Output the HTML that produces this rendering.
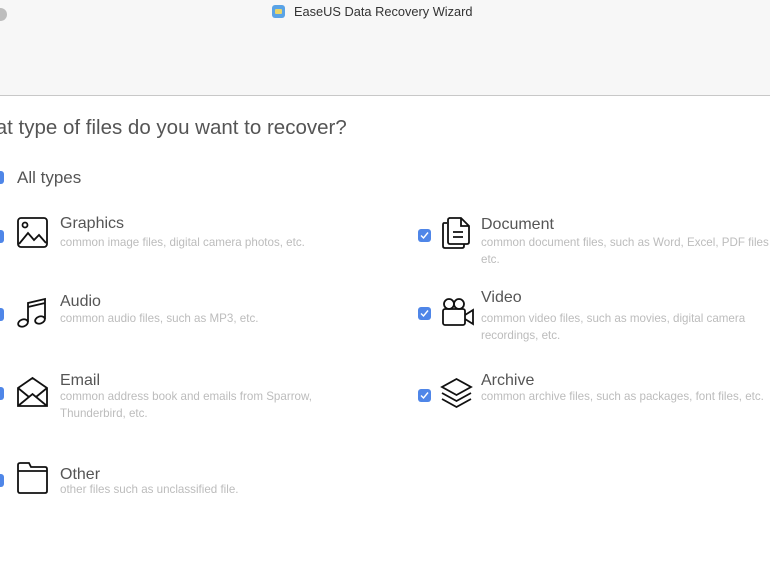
<!DOCTYPE html>
<html><head><meta charset="utf-8"><style>
*{margin:0;padding:0;box-sizing:border-box}
body{width:770px;height:578px;overflow:hidden;background:#fff;font-family:"Liberation Sans",Arial,sans-serif;position:relative}
.bar{position:absolute;left:0;top:0;width:770px;height:96px;background:#f7f7f7;border-bottom:1px solid #c8c8c8}
.dot{position:absolute;left:-6px;top:8px;width:13px;height:13px;border-radius:50%;background:#bdbdbd}
.title{position:absolute;left:294px;top:4px;font-size:12.8px;color:#333}
.appic{position:absolute;left:272px;top:5px;width:13px;height:13px;border-radius:3px;background:#5aa3e6}
.appic:after{content:"";position:absolute;left:3px;top:4px;width:7px;height:5px;background:#e9d56a;border-radius:1px}
.q{position:absolute;left:-35px;top:116px;font-size:20.5px;color:#555;white-space:nowrap}
.cb{position:absolute;width:13px;height:13px;border-radius:3px;background:#4f86e8}
.cb svg{position:absolute;left:2px;top:2px}
.h{position:absolute;font-size:16px;color:#555;white-space:nowrap}
.d{position:absolute;font-size:11.6px;color:#bcbcbc;line-height:17px}
.ic{position:absolute}
</style></head><body>
<div class="bar"><div class="dot"></div><div class="appic"></div><div class="title">EaseUS Data Recovery Wizard</div></div>
<div class="q">What type of files do you want to recover?</div>

<div class="cb" style="left:-9px;top:171px"></div>
<div class="h" style="left:17px;top:168px;font-size:17px">All types</div>

<div class="cb" style="left:-9px;top:230px"></div>
<svg class="ic" style="left:17px;top:217px" width="31" height="31" viewBox="0 0 31 31" fill="none" stroke="#111" stroke-width="1.8"><rect x="1" y="1" width="29" height="29" rx="3"/><circle cx="8" cy="8" r="2.5"/><path d="M2 27 L11 16 L17 23 L22 18 L29 26"/></svg>
<div class="h" style="left:60px;top:215px">Graphics</div>
<div class="d" style="left:60px;top:234px">common image files, digital camera photos, etc.</div>

<div class="cb" style="left:-9px;top:308px"></div>
<svg class="ic" style="left:17px;top:297px" width="32" height="32" viewBox="0 0 32 32" fill="none" stroke="#111" stroke-width="1.8"><ellipse cx="6" cy="26" rx="5" ry="3.5" transform="rotate(-20 6 26)"/><ellipse cx="23" cy="23" rx="5" ry="3.5" transform="rotate(-20 23 23)"/><path d="M11 25 L11 6 L28 2 L28 22 M11 10 L28 6"/></svg>
<div class="h" style="left:60px;top:293px">Audio</div>
<div class="d" style="left:60px;top:310px">common audio files, such as MP3, etc.</div>

<div class="cb" style="left:-9px;top:387px"></div>
<svg class="ic" style="left:17px;top:376px" width="31" height="32" viewBox="0 0 31 32" fill="none" stroke="#111" stroke-width="1.8"><path d="M1 12 L15.5 2 L30 12 L30 30 L1 30 Z M1 12 L12 21 M30 12 L19 21 M1 30 L15.5 18 L30 30"/></svg>
<div class="h" style="left:60px;top:372px">Email</div>
<div class="d" style="left:60px;top:388px;width:280px">common address book and emails from Sparrow, Thunderbird, etc.</div>

<div class="cb" style="left:-9px;top:474px"></div>
<svg class="ic" style="left:17px;top:462px" width="31" height="32" viewBox="0 0 31 32" fill="none" stroke="#111" stroke-width="1.8"><path d="M3 1 L12 1 L14 5 L28 5 Q30 5 30 7 L30 29 Q30 31 28 31 L3 31 Q1 31 1 29 L1 3 Q1 1 3 1 Z M1 9 L30 9"/></svg>
<div class="h" style="left:60px;top:466px">Other</div>
<div class="d" style="left:60px;top:481px">other files such as unclassified file.</div>

<div class="cb" style="left:418px;top:229px"><svg width="9" height="9" viewBox="0 0 9 9"><path d="M1 4.5 L3.5 7 L8 1.5" stroke="#fff" stroke-width="1.4" fill="none"/></svg></div>
<svg class="ic" style="left:442px;top:217px" width="28" height="32" viewBox="0 0 28 32" fill="none" stroke="#111" stroke-width="1.8"><path d="M5 6 L2 6 Q1 6 1 8 L1 29 Q1 31 3 31 L20 31 Q22 31 22 29 L22 27"/><path d="M7 1 L19 1 L27 9 L27 25 Q27 27 25 27 L8 27 Q6 27 6 25 L6 3 Q6 1 8 1 Z M19 1 L19 9 L27 9 M11 15 L21 15 M11 20 L21 20"/></svg>
<div class="h" style="left:481px;top:216px">Document</div>
<div class="d" style="left:481px;top:234px;width:292px">common document files, such as Word, Excel, PDF files etc.</div>

<div class="cb" style="left:418px;top:307px"><svg width="9" height="9" viewBox="0 0 9 9"><path d="M1 4.5 L3.5 7 L8 1.5" stroke="#fff" stroke-width="1.4" fill="none"/></svg></div>
<svg class="ic" style="left:442px;top:297px" width="33" height="30" viewBox="0 0 33 30" fill="none" stroke="#111" stroke-width="1.8"><circle cx="7" cy="7" r="5"/><circle cx="17" cy="7" r="5"/><rect x="1" y="12" width="22" height="16" rx="2"/><path d="M23 18 L31 13 L31 27 L23 22"/></svg>
<div class="h" style="left:481px;top:289px">Video</div>
<div class="d" style="left:481px;top:310px;width:275px">common video files, such as movies, digital camera recordings, etc.</div>

<div class="cb" style="left:418px;top:389px"><svg width="9" height="9" viewBox="0 0 9 9"><path d="M1 4.5 L3.5 7 L8 1.5" stroke="#fff" stroke-width="1.4" fill="none"/></svg></div>
<svg class="ic" style="left:440px;top:377px" width="33" height="32" viewBox="0 0 33 32" fill="none" stroke="#111" stroke-width="1.8"><path d="M16.5 2 L31 10 L16.5 18 L2 10 Z M2 16 L16.5 24 L31 16 M2 22 L16.5 30 L31 22"/></svg>
<div class="h" style="left:481px;top:372px">Archive</div>
<div class="d" style="left:481px;top:388px;white-space:nowrap">common archive files, such as packages, font files, etc.</div>
</body></html>
